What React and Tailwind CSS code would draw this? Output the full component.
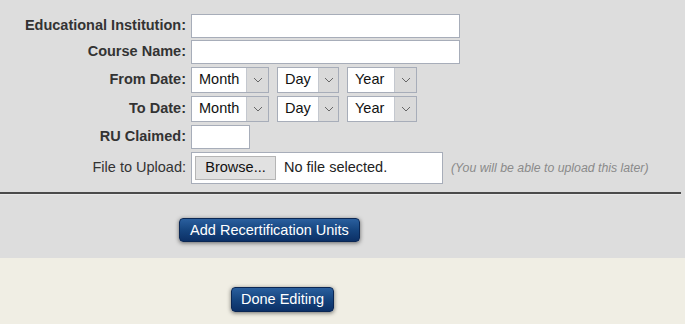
import React from "react";

function Select({ label, textW, arrowW }) {
  return (
    <div className="flex h-[26px] border border-[#a7adb9] bg-white">
      <div className="flex items-center pl-[7px] text-[14.5px] text-[#111]" style={{ width: textW }}>
        {label}
      </div>
      <div
        className="flex items-center justify-center border-l border-[#c4c8cf] bg-[#dadada]"
        style={{ width: arrowW }}
      >
        <svg width="10" height="6" viewBox="0 0 10 6" fill="none">
          <path d="M1 1 L5 5 L9 1" stroke="#666" strokeWidth="1" />
        </svg>
      </div>
    </div>
  );
}

function NavyButton({ children, className }) {
  return (
    <button
      className={
        "h-[24px] rounded-[4px] border border-[#0b2754] bg-gradient-to-b from-[#2a5f9e] via-[#16457f] to-[#0c3066] text-[14.5px] leading-none text-white shadow-[0_1px_4px_rgba(0,0,0,0.55)] " +
        className
      }
    >
      {children}
    </button>
  );
}

export default function App() {
  return (
    <div className="w-[685px] h-[324px] overflow-hidden font-['Liberation_Sans',Arial,sans-serif]">
      <div className="h-[258px] bg-[#dddddd] pt-[14px]">
        <div className="flex flex-col">
          <div className="flex h-[24px] items-center">
            <div className="w-[186px] text-right text-[14.5px] font-bold text-[#333]">Educational Institution:</div>
            <div className="ml-[5px] h-[24px] w-[269px] border border-[#a7adb9] bg-white" />
          </div>
          <div className="mt-[2px] flex h-[24px] items-center">
            <div className="w-[186px] text-right text-[14.5px] font-bold text-[#333]">Course Name:</div>
            <div className="ml-[5px] h-[24px] w-[269px] border border-[#a7adb9] bg-white" />
          </div>
          <div className="mt-[3px] flex h-[26px] items-center">
            <div className="w-[186px] text-right text-[14.5px] font-bold text-[#333]">From Date:</div>
            <div className="ml-[5px] flex gap-[8px]">
              <Select label="Month" textW={54} arrowW={22} />
              <Select label="Day" textW={40} arrowW={20} />
              <Select label="Year" textW={46} arrowW={22} />
            </div>
          </div>
          <div className="mt-[3px] flex h-[26px] items-center">
            <div className="w-[186px] text-right text-[14.5px] font-bold text-[#333]">To Date:</div>
            <div className="ml-[5px] flex gap-[8px]">
              <Select label="Month" textW={54} arrowW={22} />
              <Select label="Day" textW={40} arrowW={20} />
              <Select label="Year" textW={46} arrowW={22} />
            </div>
          </div>
          <div className="mt-[3px] flex h-[24px] items-center">
            <div className="w-[186px] text-right text-[14.5px] font-bold text-[#333]">RU Claimed:</div>
            <div className="ml-[5px] h-[24px] w-[59px] border border-[#a7adb9] bg-white" />
          </div>
          <div className="mt-[3px] flex h-[32px] items-center">
            <div className="w-[186px] text-right text-[14.5px] text-[#333]">File to Upload:</div>
            <div className="ml-[5px] flex h-[32px] w-[252px] items-center border border-[#a7adb9] bg-white pl-[3px]">
              <div className="flex h-[24px] w-[81px] items-center justify-center border border-[#b5b5b5] bg-[#e1e1e1] text-[14.5px] text-[#111]">
                Browse...
              </div>
              <span className="ml-[8px] text-[14.5px] text-[#222]">No file selected.</span>
            </div>
            <span className="ml-[8px] text-[12.3px] italic text-[#8a8a8a]">(You will be able to upload this later)</span>
          </div>
        </div>
        <div className="mt-[8px] h-[2px] w-[681px] bg-[#4a4a4a]" />
        <div className="h-[1px] w-[681px] bg-[#e8e8e8]" />
        <div className="mt-[23px] pl-[179px]">
          <NavyButton className="w-[181px]">Add Recertification Units</NavyButton>
        </div>
      </div>
      <div className="h-[66px] bg-[#f0eee4] pt-[29px]">
        <div className="pl-[231px]">
          <NavyButton className="h-[25px] w-[103px]">Done Editing</NavyButton>
        </div>
      </div>
    </div>
  );
}
